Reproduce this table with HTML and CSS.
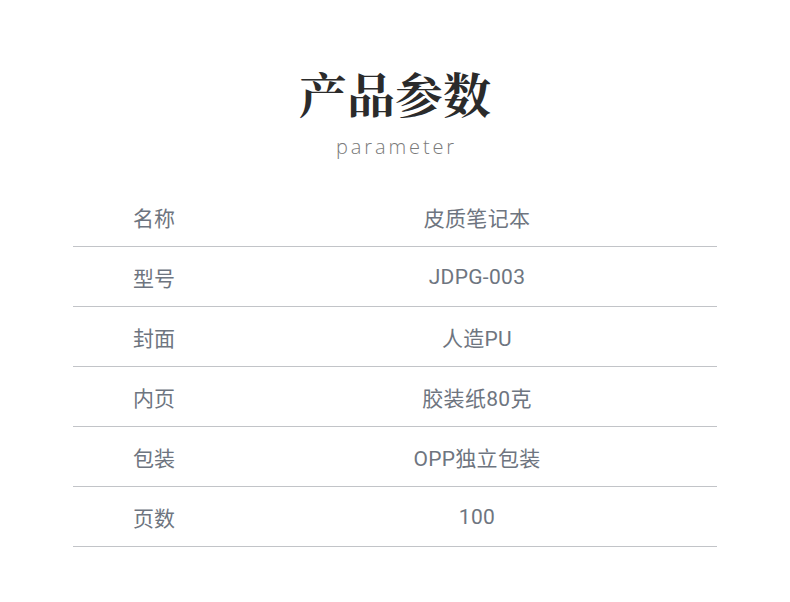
FILE: index.html
```html
<!DOCTYPE html>
<html lang="zh">
<head>
<meta charset="utf-8">
<link rel="stylesheet" href="styles.css">
</head>
<body>
<div class="page">
  <header class="head">
    <h1 class="title">产品参数</h1>
    <div class="sub">parameter</div>
  </header>
  <div class="table">
    <div class="row"><div class="k">名称</div><div class="v">皮质笔记本</div></div>
    <div class="row"><div class="k">型号</div><div class="v">JDPG-003</div></div>
    <div class="row"><div class="k">封面</div><div class="v">人造PU</div></div>
    <div class="row"><div class="k">内页</div><div class="v">胶装纸80克</div></div>
    <div class="row"><div class="k">包装</div><div class="v">OPP独立包装</div></div>
    <div class="row"><div class="k">页数</div><div class="v">100</div></div>
  </div>
</div>
</body>
</html>
```
FILE: styles.css
```css
html, body { margin: 0; padding: 0; background: #fff; }
.page { width: 790px; height: 602px; }
.head { display: flex; flex-direction: column; align-items: center; padding-top: 63px; }
.title {
  margin: 0;
  font-family: "Noto Serif CJK SC", "Noto Sans CJK SC", serif;
  font-weight: 700;
  font-size: 48px;
  line-height: 60px;
  color: #2b2b2b;
}
.sub {
  margin-top: 10px;
  font-family: "Open Sans", "Noto Sans", sans-serif;
  font-weight: 300;
  font-size: 20px;
  line-height: 28px;
  letter-spacing: 2.9px;
  color: #7a7a7a;
  padding-left: 3px;
}
.table { margin: 26px 73px 0 73px; }
.row {
  display: flex;
  align-items: center;
  height: 59px;
  border-bottom: 1px solid #c2c4c8;
  font-family: Roboto, "Noto Sans CJK SC", sans-serif;
  font-size: 21px;
  color: #6e7580;
}
.k { width: 104px; padding-left: 60px; }
.v { flex: 1; text-align: center; letter-spacing: 0.3px; }
```
